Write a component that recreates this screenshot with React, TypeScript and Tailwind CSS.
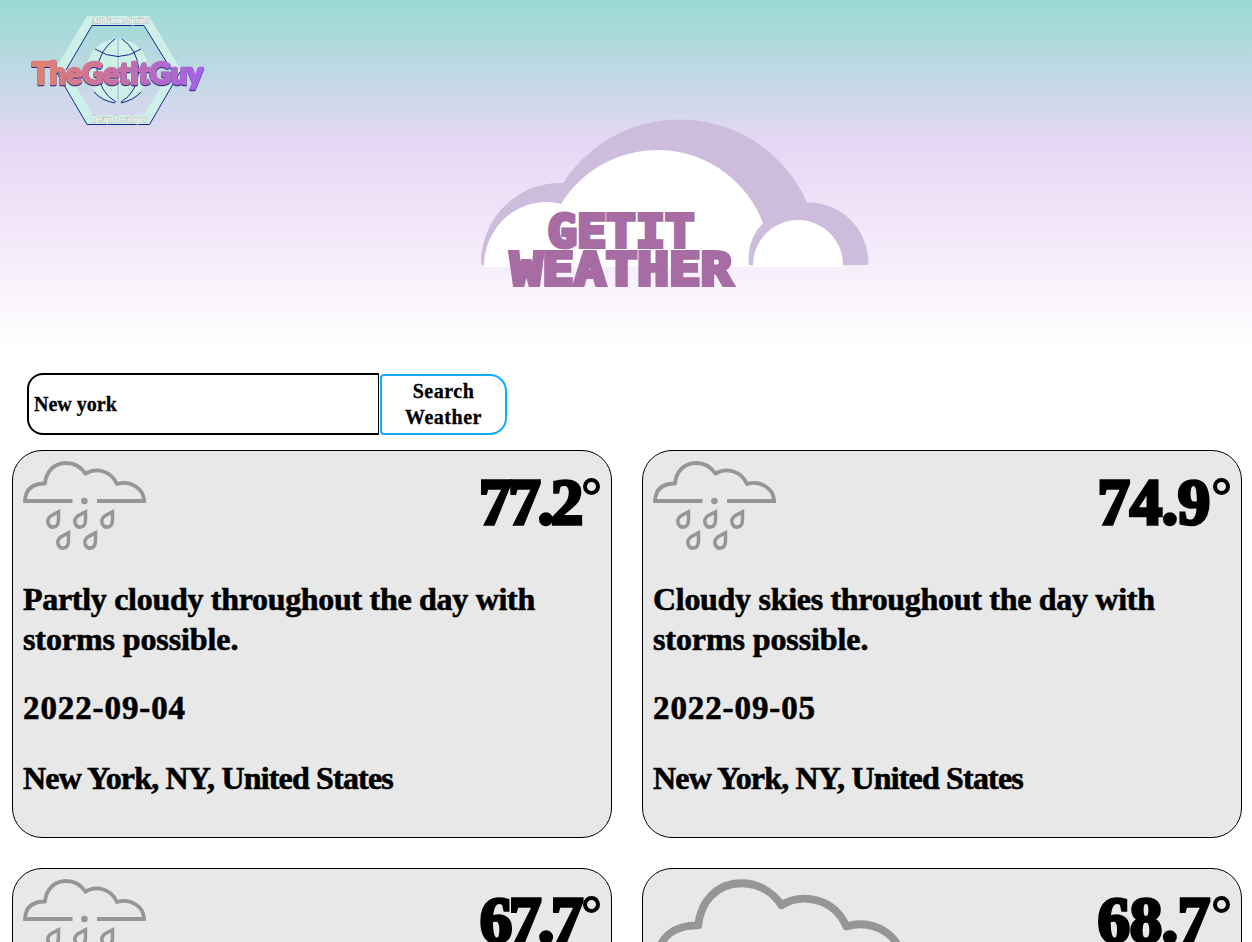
import React from "react";

type Forecast = {
  temp: string;
  tempClass: string;
  lines: { text: string; spacing: string }[];
  date: string;
  icon: "rain" | "cloud";
};

const forecasts: Forecast[] = [
  {
    temp: "77.2",
    tempClass: "tracking-[-3.2px]",
    lines: [
      { text: "Partly cloudy throughout the day with", spacing: "tracking-[-0.3px]" },
      { text: "storms possible.", spacing: "tracking-[-0.1px]" },
    ],
    date: "2022-09-04",
    icon: "rain",
  },
  {
    temp: "74.9",
    tempClass: "tracking-[-0.3px]",
    lines: [
      { text: "Cloudy skies throughout the day with", spacing: "tracking-[-0.3px]" },
      { text: "storms possible.", spacing: "tracking-[-0.1px]" },
    ],
    date: "2022-09-05",
    icon: "rain",
  },
  {
    temp: "67.7",
    tempClass: "tracking-[-3.4px]",
    lines: [{ text: "Partly cloudy throughout the day.", spacing: "tracking-[-0.3px]" }],
    date: "2022-09-06",
    icon: "rain",
  },
  {
    temp: "68.7",
    tempClass: "tracking-[-0.3px]",
    lines: [{ text: "Cloudy skies throughout the day.", spacing: "tracking-[-0.3px]" }],
    date: "2022-09-07",
    icon: "cloud",
  },
];

const cloudTop =
  "M2 40 C2.5 28 10 22.5 22 22.5 C23 11 31 2 43 2 C51 2 58 6 62.5 12.7 C72 6.5 88 9 94 23 C108 19 121 28 121 40";

function RainIcon() {
  return (
    <svg className="h-[90px] w-[124px] shrink-0" viewBox="0 0 124 90" fill="none" stroke="#969696" strokeWidth="3.8" strokeLinejoin="round">
      <path d={cloudTop} />
      <path d="M0.2 40H49.5M74 40H123" />
      <circle cx="61.4" cy="40" r="3.3" fill="#969696" stroke="none" />
      {[
        [30.2, 57],
        [57.2, 57],
        [84.2, 57],
        [40.2, 78],
        [67.2, 78],
      ].map(([x, y]) => (
        <path
          key={`${x}-${y}`}
          transform={`translate(${x} ${y})`}
          strokeLinejoin="miter"
          strokeWidth="3.5"
          d="M5.3 -6.2 L-2 -2.3 C-8.500 2.500 -4.500 9.500 0.500 9.100 C4.500 8.700 5.300 5 5.300 1.500 Z"
        />
      ))}
    </svg>
  );
}

function CloudIcon() {
  return (
    <svg className="h-[174px] w-[255px] shrink-0" viewBox="0 0 124 84.5" fill="none" stroke="#969696" strokeWidth="3.8" strokeLinejoin="round">
      <path d={cloudTop + " Z"} />
    </svg>
  );
}

function Card({ f }: { f: Forecast }) {
  return (
    <article className="h-[388px] overflow-hidden rounded-[30px] border border-black bg-[#e8e8e8] p-[10px]">
      <div className="flex h-[89px] items-start justify-between">
        {f.icon === "rain" ? <RainIcon /> : <CloudIcon />}
        <div className="flex items-start pr-[1px] pt-[6px]">
          <span className={`text-[65px] leading-[70px] [-webkit-text-stroke:3.4px_#000] ${f.tempClass}`}>{f.temp}</span>
          <span className="ml-[3px] mt-[11px] block h-[17px] w-[17px] rounded-full border-[4px] border-black" role="img" aria-label="degrees" />
        </div>
      </div>
      <p className="mt-[29px] whitespace-nowrap">
        {f.lines.map((l) => (
          <span key={l.text} className={`block ${l.spacing}`}>{l.text}</span>
        ))}
      </p>
      <p className="mt-[29px] text-[33px] tracking-[0.9px]">{f.date}</p>
      <p className="mt-[30px] whitespace-nowrap tracking-[-0.83px]">New York, NY, United States</p>
    </article>
  );
}

function BrandLogo() {
  return (
    <svg className="h-[120px] w-[180px]" viewBox="28 10 180 120">
      <defs>
        <linearGradient id="brand" x1="0" x2="1">
          <stop offset="0" stopColor="#e2816e" />
          <stop offset="0.45" stopColor="#c8739f" />
          <stop offset="1" stopColor="#a261e8" />
        </linearGradient>
      </defs>
      <path fillRule="evenodd" fill="#cdf1e6" d="M87 16H149L181 70L150 124H86L55 70Z M92 26L66 70L93 115H144L171 70L144 26Z" />
      <path d="M66 70L92 25.500H144L172 71M57 73L87 124.500H149.500L180 72" fill="none" stroke="#16248f" strokeWidth="1" />
      <circle cx="117.500" cy="70" r="31" fill="#cdf1e6" />
      <path d="M118 39V102" stroke="#b7cfe1" strokeWidth="2" />
      <path
        d="M95 49Q118 64 141 49M115 39Q100 49 97 70Q100 93 116 102M122 39Q137 49 139 70Q137 93 121 102M94 92Q102 101 115 103M141 92Q134 100 121 103"
        fill="none"
        stroke="#16248f"
        strokeWidth="1"
      />
      <g fontFamily="Liberation Serif" fontWeight="700" fontSize="8.5" fill="#fff" stroke="#a9b3b0" strokeWidth="0.9" paintOrder="stroke">
        <text x="92" y="22.500" textLength="57" lengthAdjust="spacingAndGlyphs">Art Games Sprites</text>
        <text x="92" y="121.500" textLength="55" lengthAdjust="spacingAndGlyphs">Design Developer</text>
      </g>
      <text
        className="drop-shadow-[0_1px_0_#252681]"
        x="32"
        y="84"
        fontFamily="Lato"
        fontWeight="900"
        fontSize="31"
        strokeWidth="2.500"
        strokeLinejoin="round"
        fill="url(#brand)"
        stroke="url(#brand)"
        textLength="171"
        lengthAdjust="spacingAndGlyphs"
      >
        TheGetItGuy
      </text>
    </svg>
  );
}

function WeatherLogo() {
  return (
    <svg className="h-[172px] w-[390px]" viewBox="480 118 390 172">
      <path fill="#cdbcdc" d="M482 265Q481 265 481 262A79 80 0 0 1 563 183A139 139 0 0 1 807 202.500A60 61 0 0 1 868.500 262Q868.500 265 866 265Z" />
      <path fill="#fff" d="M484 265A62 64 0 0 1 561 204A113 113 0 0 1 763 223A55 55 0 0 0 749 265L750 267H486Z" />
      <path fill="#cdbcdc" d="M751 265Q749 265 749 262A50 50 0 0 1 763 223L780 225L756 265Z" />
      <path fill="#fff" d="M753 267V265A45 45 0 0 1 843 265V267Z" />
      <g fontFamily="DejaVu Sans Mono" fontWeight="700" fontSize="44.5" fill="#a66ca3" stroke="#a66ca3" strokeWidth="4" strokeLinejoin="miter" strokeMiterlimit="2">
        <text x="547.500" y="247" textLength="147" lengthAdjust="spacingAndGlyphs">GETIT</text>
        <text x="510.500" y="285" textLength="222" lengthAdjust="spacingAndGlyphs">WEATHER</text>
      </g>
    </svg>
  );
}

export default function App() {
  return (
    <div className="h-[942px] overflow-hidden bg-white font-['Liberation_Serif',serif] font-bold text-black">
      <header className="h-[350px] bg-[linear-gradient(to_bottom,#98dad3_0px,#e9d7f5_150px,#ffffff_348px)] pt-[10px]">
        <div className="h-[108px] pl-[28px]">
          <BrandLogo />
        </div>
        <div className="flex pl-[480px]">
          <WeatherLogo />
        </div>
      </header>
      <form className="flex h-[100px] items-start pl-[27px] pt-[23px]" onSubmit={(e) => e.preventDefault()}>
        <input
          aria-label="Location"
          className="mr-px h-[62px] w-[352px] rounded-l-[16px] border-2 border-r border-black bg-white px-[5px] text-[20px] outline-none [-webkit-text-stroke:0.3px_#000]"
          defaultValue="New york"
        />
        <button className="mt-[1px] h-[61px] w-[127px] rounded-l-[4px] rounded-r-[17px] border-2 border-[#12aaff] bg-white pb-[1px] text-center text-[20px] leading-[26px] tracking-[0.5px] [-webkit-text-stroke:0.3px_#000]">
          Search
          <br />
          Weather
        </button>
      </form>
      <main className="grid grid-cols-[600px_600px] gap-[30px] pl-[12px] text-[32px] leading-[40px] [-webkit-text-stroke:0.6px_#000]">
        {forecasts.map((f) => (
          <Card key={f.date} f={f} />
        ))}
      </main>
    </div>
  );
}
